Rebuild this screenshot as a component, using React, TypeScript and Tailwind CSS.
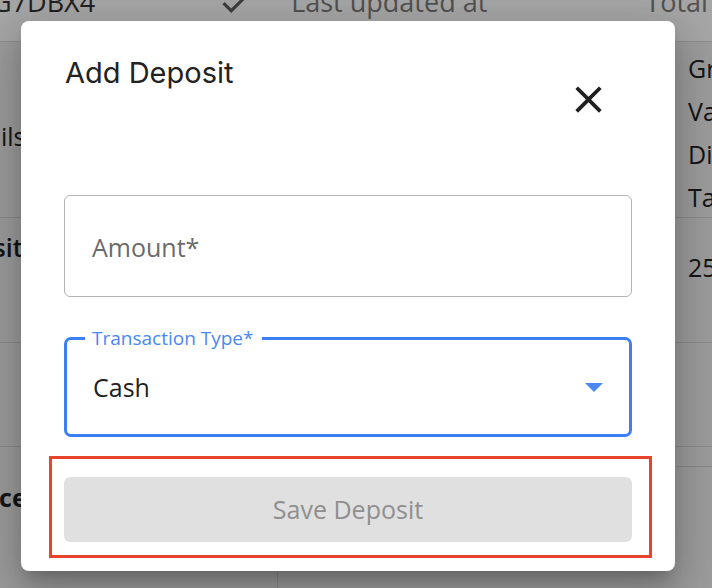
import React from "react"

const rightLines = ["Gross", "Value", "Discount", "Tax"]

function CloseIcon() {
    return (
        <svg viewBox="0 0 24 24" className="w-[45px] h-[45px] fill-[#1f1f1f]">
            <path d="M19 6.41 17.59 5 12 10.59 6.41 5 5 6.41 10.59 12 5 17.59 6.41 19 12 13.41 17.59 19 19 17.59 13.41 12z" />
        </svg>
    )
}

function CheckIcon() {
    return (
        <svg viewBox="0 0 24 24" className="w-[38px] h-[38px] fill-[#5f5f5f]">
            <path d="M9 16.17 4.83 12l-1.42 1.41L9 19 21 7l-1.41-1.41z" />
        </svg>
    )
}

export default function App() {
    return (
        <div className="relative w-[712px] h-[588px] overflow-hidden bg-[#f0f0f0] font-['Open_Sans',sans-serif] text-[#212121]">
            {/* page behind the dialog */}
            <header className="h-[42px] overflow-hidden bg-white border-b border-[#d8d8d8]">
                <div className="flex items-start -mt-[12px] text-[27px] leading-none whitespace-nowrap">
                    <span className="-ml-[8px] text-[#343434]">G7DBX4</span>
                    <span className="ml-[122px] -mt-[5px]">
                        <CheckIcon />
                    </span>
                    <span className="ml-[36px] text-[#7d7d7d]">Last updated at</span>
                    <span className="ml-[158px] text-[#7d7d7d]">Total</span>
                </div>
            </header>

            <div className="text-[25px] whitespace-nowrap">
                <div className="flex h-[176px] border-b border-[#d4d4d4]">
                    <div className="w-[688px] shrink-0 overflow-hidden pt-[73px] leading-[43px]">
                        <span className="block -ml-[54px]">Details</span>
                    </div>
                    <div className="flex flex-col pt-[5px] leading-[43px]">
                        {rightLines.map((l) => (
                            <span key={l}>{l}</span>
                        ))}
                    </div>
                </div>
                <div className="flex h-[125px] border-b border-[#d4d4d4]">
                    <div className="w-[688px] shrink-0 overflow-hidden pt-[8px] leading-[43px] font-semibold">
                        <span className="block -ml-[70px]">Deposit</span>
                    </div>
                    <div className="pt-[28px] leading-[43px]">250.00</div>
                </div>
                <div className="h-[104px] border-b border-[#d4d4d4]" />
                <div className="flex h-[141px]">
                    <div className="w-[278px] shrink-0 border-r border-[#d4d4d4] overflow-hidden pt-[29px] leading-[43px] font-bold">
                        <span className="block -ml-[72px]">Balance</span>
                    </div>
                    <div className="flex-1">
                        <div className="h-[20px] border-b border-[#d4d4d4]" />
                    </div>
                </div>
            </div>

            {/* backdrop */}
            <div className="absolute inset-0 bg-black/35" />

            {/* dialog */}
            <div className="absolute left-[21px] top-[21px] w-[654px] rounded-[8px] bg-white px-[43px] pb-[29px] shadow-[0_11px_15px_-7px_rgba(0,0,0,0.2),0_24px_38px_3px_rgba(0,0,0,0.14),0_9px_46px_8px_rgba(0,0,0,0.12)]">
                <div className="flex h-[174px] items-start justify-between">
                    <h2 className="mt-[34px] ml-[1px] text-[29px] leading-[36px] font-['Inter',sans-serif] text-[#222]">
                        Add Deposit
                    </h2>
                    <button className="mt-[56px] mr-[21px]">
                        <CloseIcon />
                    </button>
                </div>

                <div className="flex h-[102px] items-center rounded-[6px] border border-[#b3b3b3] pl-[27px] pt-[3px] text-[25px] text-[#6b6b6b]">
                    Amount*
                </div>

                <div className="relative mt-[40px] flex h-[100px] items-center rounded-[7px] border-[3px] border-[#3b7ef6] pl-[26px] pr-[26px]">
                    <span className="absolute left-[18px] -top-[14px] bg-white pl-[7px] pr-[9px] text-[19px] leading-[24px] text-[#4a88f5]">
                        Transaction Type*
                    </span>
                    <span className="flex-1 pt-[2px] text-[25px] text-[#1f1f1f]">Cash</span>
                    <svg viewBox="0 0 18 9" className="w-[18px] h-[9px] fill-[#4a88f5]">
                        <polygon points="0,0 18,0 9,9" />
                    </svg>
                </div>

                <button className="mt-[40px] flex h-[65px] w-full items-center justify-center rounded-[6px] bg-[#e0e0e0] text-[25px] text-[#8f8f8f]">
                    Save Deposit
                </button>
            </div>

            {/* highlight around the button */}
            <div className="absolute left-[49px] top-[456px] w-[603px] h-[102px] border-[3px] border-[#e8432b]" />
        </div>
    )
}
